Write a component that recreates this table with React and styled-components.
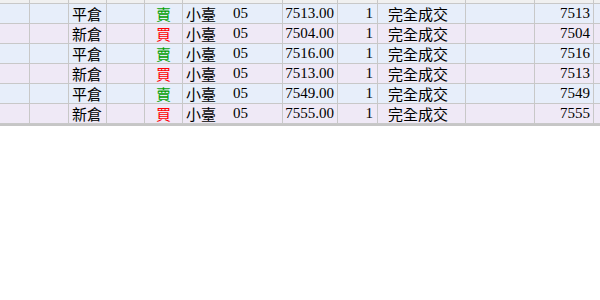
import React from "react";
import styled, { createGlobalStyle } from "styled-components";

const Global = createGlobalStyle`
  html, body { margin: 0; padding: 0; background: #ffffff; }
  body { font-family: "Liberation Serif", "Noto Sans CJK TC", serif; }
`;

const COLS = "30px 39px 38px 38px 38px 100px 55px 40px 88px 69px 59px 1fr";

const Grid = styled.div`
  width: 600px;
  border-bottom: 2px solid #c6c6c6;
`;

const Row = styled.div`
  display: grid;
  grid-template-columns: ${COLS};
  height: ${(p) => (p.$band ? "4px" : "20px")};
  box-sizing: border-box;
  border-bottom: 1px solid #c8c8c8;
  background: ${(p) => (p.$band ? "#f0f0f0" : p.$alt ? "#efe9f6" : "#e7eefa")};
`;

const Cell = styled.div`
  box-sizing: border-box;
  border-right: ${(p) => (p.$last ? "none" : "1px solid #c8c8c8")};
  display: flex;
  align-items: center;
  justify-content: ${(p) =>
    p.$align === "right" ? "flex-end" : p.$align === "center" ? "center" : "flex-start"};
  padding: ${(p) => p.$pad || "0 3px"};
  font-size: 15px;
  line-height: 19px;
  color: ${(p) => p.$color || "#000"};
  white-space: nowrap;
  overflow: hidden;
`;

const CJK = styled.span`
  font-family: "Noto Sans CJK TC", sans-serif;
  font-size: 15px;
  font-weight: 400;
`;

const Num = styled.span`
  font-family: "Liberation Serif", serif;
  font-size: 15px;
`;

const Month = styled.span`
  margin-left: 17px;
  font-family: "Liberation Serif", serif;
`;

const rows = [
  { oc: "平倉", side: "賣", price: "7513.00", last: "7513" },
  { oc: "新倉", side: "買", price: "7504.00", last: "7504" },
  { oc: "平倉", side: "賣", price: "7516.00", last: "7516" },
  { oc: "新倉", side: "買", price: "7513.00", last: "7513" },
  { oc: "平倉", side: "賣", price: "7549.00", last: "7549" },
  { oc: "新倉", side: "買", price: "7555.00", last: "7555" },
];

export default function App() {
  return (
    <>
      <Global />
      <Grid>
        <Row $band>
          {Array.from({ length: 12 }).map((_, i) => (
            <Cell key={i} $last={i === 11} />
          ))}
        </Row>
        {rows.map((r, i) => (
          <Row key={i} $alt={i % 2 === 1}>
            <Cell />
            <Cell />
            <Cell><CJK>{r.oc}</CJK></Cell>
            <Cell />
            <Cell $align="center" $color={r.side === "賣" ? "#00a000" : "#ff0000"}>
              <CJK>{r.side}</CJK>
            </Cell>
            <Cell>
              <CJK>小臺</CJK>
              <Month>05</Month>
            </Cell>
            <Cell $align="right"><Num>{r.price}</Num></Cell>
            <Cell $align="right" $pad="0 4px"><Num>1</Num></Cell>
            <Cell $pad="0 0 0 10px"><CJK>完全成交</CJK></Cell>
            <Cell />
            <Cell $align="right"><Num>{r.last}</Num></Cell>
            <Cell $last />
          </Row>
        ))}
      </Grid>
    </>
  );
}
